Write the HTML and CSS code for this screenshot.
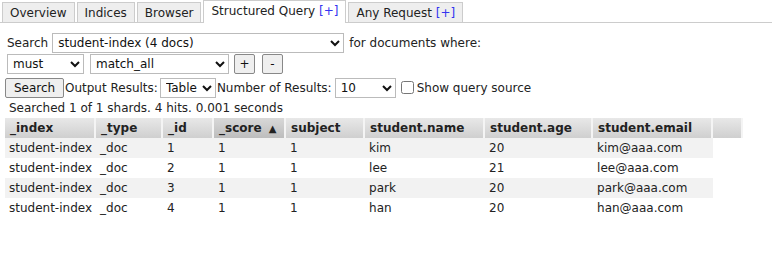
FILE: index.html
```html
<!DOCTYPE html>
<html lang="en">
<head>
    <meta charset="UTF-8">
    <title>Structured Query</title>
    <link rel="stylesheet" href="styles.css">
</head>
<body>
    <div class="tabs">
        <div class="tab">Overview</div>
        <div class="tab">Indices</div>
        <div class="tab">Browser</div>
        <div class="tab active">Structured Query <span class="plus">[+]</span></div>
        <div class="tab">Any Request <span class="plus">[+]</span></div>
    </div>

    <div class="query">
        <div class="row">
            <label>Search</label>
            <select class="sel-index"><option>student-index (4 docs)</option></select>
            <span>for documents where:</span>
        </div>
        <div class="row">
            <select class="sel-bool"><option>must</option></select>
            <select class="sel-field"><option>match_all</option></select>
            <button class="small">+</button>
            <button class="small">-</button>
        </div>
        <div class="row tight">
            <button class="search">Search</button>
            <span>Output Results:</span>
            <select class="sel-output"><option>Table</option></select>
            <span>Number of Results:</span>
            <select class="sel-size"><option>10</option></select>
            <label class="check"><input type="checkbox"> Show query source</label>
        </div>
    </div>

    <div class="summary">Searched 1 of 1 shards. 4 hits. 0.001 seconds</div>

    <table class="results">
        <thead>
            <tr>
                <th class="c-index">_index</th>
                <th class="c-type">_type</th>
                <th class="c-id">_id</th>
                <th class="c-score">_score <span class="arrow">&#9650;</span></th>
                <th class="c-subject">subject</th>
                <th class="c-name">student.name</th>
                <th class="c-age">student.age</th>
                <th class="c-email">student.email</th>
                <th class="c-fill"></th>
            </tr>
        </thead>
        <tbody>
            <tr><td>student-index</td><td>_doc</td><td>1</td><td>1</td><td>1</td><td>kim</td><td>20</td><td>kim@aaa.com</td><td class="c-fill"></td></tr>
            <tr><td>student-index</td><td>_doc</td><td>2</td><td>1</td><td>1</td><td>lee</td><td>21</td><td>lee@aaa.com</td><td class="c-fill"></td></tr>
            <tr><td>student-index</td><td>_doc</td><td>3</td><td>1</td><td>1</td><td>park</td><td>20</td><td>park@aaa.com</td><td class="c-fill"></td></tr>
            <tr><td>student-index</td><td>_doc</td><td>4</td><td>1</td><td>1</td><td>han</td><td>20</td><td>han@aaa.com</td><td class="c-fill"></td></tr>
        </tbody>
    </table>
</body>
</html>
```

FILE: styles.css
```css
body {
    font-family: "DejaVu Sans", Verdana, sans-serif;
    font-size: 12px;
    color: #222;
    margin: 0;
    background: #fff;
}

select, button, input {
    font-family: inherit;
    font-size: 12px;
    color: #111;
}

.tabs {
    display: flex;
    align-items: flex-end;
    height: 22px;
    padding-left: 2px;
    border-bottom: 1px solid #ccc;
}

.tab {
    height: 19px;
    line-height: 21px;
    padding: 0 7px;
    margin-right: 2px;
    background: #eee;
    border: 1px solid #ccc;
    border-bottom: none;
}

.tab.active {
    height: 21px;
    margin-bottom: -1px;
    background: #fff;
    padding-bottom: 1px;
}

.plus {
    color: #3434f0;
}

.query {
    padding: 9px 0 0 5px;
}

.row {
    display: flex;
    align-items: center;
    height: 21px;
}

.row label {
    margin: 0 4px 0 2px;
}

.row span {
    margin-left: 5px;
}

select {
    height: 20px;
    border: 1px solid #bbb;
    border-radius: 0;
    background: #fff;
    padding: 0 1px;
}

.sel-index { width: 292px; }
.sel-bool { width: 77px; margin-left: 2px; }
.sel-field { width: 139px; margin-left: 6px; }
.sel-output { width: 56px; margin-left: 2px; }
.sel-size { width: 61px; margin-left: 3px; }

button {
    background: #efefef;
    border: 1px solid #888;
    border-radius: 2px;
    height: 20px;
    padding: 0 5px;
}

button.small {
    width: 21px;
    padding: 0;
    margin-left: 5px;
}

button.small + button.small {
    margin-left: 7px;
}

.row.tight {
    margin-top: 3px;
}

.row.tight span {
    margin-left: 1px;
}

.search {
    width: 59px;
}

.check {
    display: flex;
    align-items: center;
    margin: 0 0 0 3px !important;
}

.check input {
    margin: 0 3px 0 2px;
    width: 13px;
    height: 13px;
}

.summary {
    padding: 3px 0 0 9px;
    height: 17px;
}

.results {
    border-collapse: collapse;
    table-layout: fixed;
    margin-left: 5px;
}

.results th {
    height: 20px;
    padding: 0 5px;
    text-align: left;
    font-weight: bold;
    background: linear-gradient(#e8e8e8, #cfcfcf);
    box-shadow: inset -2px 0 #f4f4f4;
    white-space: nowrap;
    overflow: hidden;
}

.results td {
    height: 20px;
    padding: 0 4px;
    white-space: nowrap;
}

.results tbody tr:nth-child(odd) td {
    background: #f2f2f2;
}

.results tbody tr td.c-fill {
    background: #fff;
}

.arrow {
    font-size: 10px;
    margin-left: 3px;
}

.c-index { width: 78px; }
.c-type { width: 57px; }
.c-id { width: 41px; }
.c-score { width: 62px; background: linear-gradient(#d8d8d8, #bdbdbd) !important; }
.c-subject { width: 69px; }
.c-name { width: 110px; }
.c-age { width: 98px; }
.c-email { width: 110px; }
.results th.c-fill { width: 20px; }
```
